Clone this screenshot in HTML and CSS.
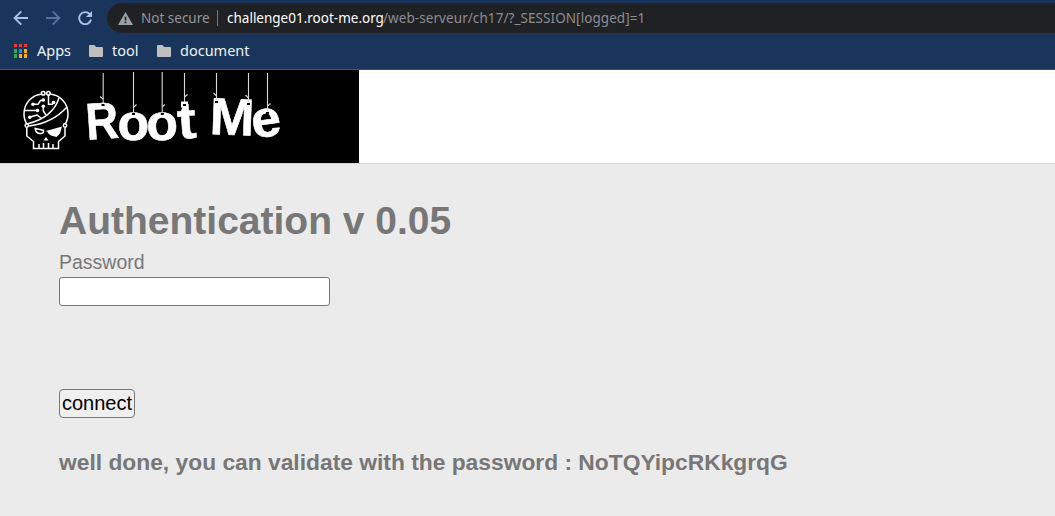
FILE: index.html
```
<!DOCTYPE html>
<html lang="en">
<head>
<meta charset="utf-8">
<title>Authentication v 0.05</title>
<link rel="stylesheet" href="styles.css">
</head>
<body>
<header class="browser">
  <div class="toolbar">
    <svg class="nav" width="107" height="36" viewBox="0 0 107 36" fill="none" stroke="#a9c3e8" stroke-width="1.9">
      <path d="M28 18H15.2M21.3 11.3L14.6 18L21.3 24.7"/>
      <path d="M46 18H58.8M52.7 11.3L59.4 18L52.7 24.7" stroke="#56729c"/>
      <path d="M89.7 14.2A6 6 0 1 0 91 19.5"/>
      <path d="M92 11V17H86Z" fill="#a9c3e8" stroke="none"/>
    </svg>
    <div class="address">
      <svg class="warn" width="15" height="13" viewBox="0 0 15 13"><path d="M7.5 0L15 13H0Z" fill="#9aa0a6"/><path d="M7.5 4.8V8.5M7.5 9.6V11.3" stroke="#202124" stroke-width="1.6"/></svg>
      <span class="insecure">Not secure</span>
      <span class="divider"></span>
      <span class="host">challenge01.root-me.org</span><span class="path">/web-serveur/ch17/?_SESSION[logged]=1</span>
    </div>
  </div>
  <nav class="bookmarks">
    <svg class="apps" width="13" height="14" viewBox="0 0 13 14">
      <path d="M0 0h3v3H0zM5 0h3v3H5zM10 0h3v3h-3z" fill="#f4372d"/>
      <path d="M0 5h3v4H0zM0 10h3v4H0z" fill="#34a853"/>
      <path d="M5 5h3v4H5z" fill="#268bf0"/>
      <path d="M10 5h3v4h-3zM5 10h3v4H5zM10 10h3v4h-3z" fill="#fbb00b"/>
    </svg>
    <span class="label label-apps">Apps</span>
    <svg class="folder" width="14" height="12" viewBox="0 0 14 12"><path d="M1 0h4.5L7 2h6q1 0 1 1v8q0 1-1 1H1q-1 0-1-1V1q0-1 1-1z" fill="#bfbfbf"/></svg>
    <span class="label label-tool">tool</span>
    <svg class="folder" width="14" height="12" viewBox="0 0 14 12"><path d="M1 0h4.5L7 2h6q1 0 1 1v8q0 1-1 1H1q-1 0-1-1V1q0-1 1-1z" fill="#bfbfbf"/></svg>
    <span class="label label-document">document</span>
  </nav>
</header>
<div class="banner">
  <svg class="logo" width="359" height="93" viewBox="0 70 359 93">
    <rect y="70" width="359" height="93" fill="#000"/>
    <g fill="none" stroke="#fff" stroke-width="1.5">
      <path d="M42 94C32 95 24 103 24 114Q24 120 27 124M50 94C60 95 68 103 68 114Q68 120 65 124"/>
      <circle cx="43.2" cy="93.3" r="1.8"/><circle cx="48.4" cy="93.3" r="1.8"/>
      <circle cx="26.8" cy="125.5" r="1.7"/><circle cx="65" cy="125.5" r="1.7"/>
      <path d="M26.8 127.5V136L33.5 141.5V148.5H58.5V141.5L65 136V127.5"/>
      <path d="M39 148V144M43.5 148V143M48.5 148V143M53 148V144"/>
      <path d="M27 124C43 120 55 111 59 98M29 126C45 124 58 117 67 107"/>
      <path d="M33 104.3H38L40.5 100.5H43M25 110.5H37M43.3 107V111L46 115M30 117L37 115L41 118M48.5 95V104.3H53"/>
      <path d="M34.5 128.2L44 130.6M35 128.5Q36 134 41 133.5Q44 133 43.5 130"/>
    </g>
    <g fill="#fff">
      <circle cx="33" cy="104.3" r="1.8"/><circle cx="43.3" cy="100" r="1.8"/><circle cx="43.3" cy="106.2" r="1.8"/><circle cx="37.5" cy="110.5" r="1.8"/><circle cx="29.8" cy="117.2" r="1.8"/><circle cx="53.5" cy="102.5" r="1.8"/>
      <path d="M46 131L62 126.5L60 133.5L56.5 137L51 135.5Q48.5 134 47.5 132ZM46 137L48.5 140.5H43.5Z"/>
    </g>
    <g class="letters">
      <text transform="translate(87 140) rotate(-4) scale(.87 1)">R</text>
      <text transform="translate(117.5 140.3)">o</text>
      <text transform="translate(146.2 140.3)">o</text>
      <text transform="translate(178.5 139) rotate(-4) scale(1.08 1)">t</text>
      <text transform="translate(209.3 134) rotate(2) scale(1.03 1)">M</text>
      <text transform="translate(253.5 138.5) rotate(-8) scale(1.02 1)">e</text>
    </g>
    <g stroke="#d8d8d8" stroke-width="1.1" fill="none">
      <path d="M103.2 73V103M133.5 72V112M162.2 72V112M184.5 73V103M216.5 73V100M248.5 73V102M267.5 73V111"/>
      <path d="M103 99L100 96.5M134 107L136.5 104.5M162 107L165 104.5M184.5 97L187.5 94.5M216.5 96L213.5 93M248.5 98L245.5 95M267.5 106L270.5 103.5"/>
    </g>
    <path d="M181 101.5h7v6h-7z" fill="#fff"/>
    <path d="M101.5 104h3v2h-3zM132 113h3v2h-3zM160.8 113h3v2h-3zM183 104h3v2h-3zM215 101h3v2h-3zM247 103h3v2h-3zM266 112h3v2h-3z" fill="#000"/>
  </svg>
</div>
<main class="content">
  <h1 class="title">Authentication v 0.05</h1>
  <form class="form">
    <label class="caption" for="password">Password</label>
    <input class="field" id="password" type="password">
    <button class="connect" type="button">connect</button>
  </form>
  <h3 class="message">well done, you can validate with the password : NoTQYipcRKkgrqG</h3>
</main>
</body>
</html>
```
FILE: styles.css
```
* { box-sizing: border-box; }
body {
  margin: 0;
  height: 516px;
  overflow: hidden;
  background: #ebebeb;
  color: #777;
  font-family: "Liberation Sans", Arial, sans-serif;
}
.browser {
  height: 70px;
  background: #1a355b;
  border-bottom: 1px solid #3c5474;
  font-family: "Noto Sans", sans-serif;
}
.toolbar { display: flex; height: 36px; }
.nav { flex: none; }
.address {
  display: flex;
  align-items: center;
  flex: 1;
  height: 30px;
  margin-top: 3px;
  padding-left: 11px;
  border-radius: 15px 0 0 15px;
  background: #202124;
  color: #92969b;
  font-size: 13.5px;
  white-space: nowrap;
}
.insecure { width: 69px; margin-left: 8px; }
.divider { width: 1px; height: 16px; margin: 0 9px 0 7px; background: #74777b; }
.host { width: 156px; color: #fff; }
.path { color: #8b8e92; letter-spacing: 0.07px; }
.bookmarks {
  display: flex;
  align-items: center;
  height: 30px;
  padding-left: 14px;
  color: #f0f3f7;
  font-size: 14.5px;
}
.label { line-height: 20px; margin-top: -2px; white-space: nowrap; }
.label-apps { width: 35px; margin-right: 17px; margin-left: 10px; }
.label-tool { width: 28px; margin-right: 17px; margin-left: 9px; }
.label-document { margin-left: 9px; }
.banner { height: 94px; background: #fff; border-bottom: 1px solid #d5d5d5; }
.logo { display: block; }
.letters {
  fill: #fff;
  stroke: #fff;
  stroke-width: 0.6px;
  font: bold 52px "Liberation Sans", Arial, sans-serif;
}
.content { padding: 34px 59px 0; }
.title { margin: 0; font-size: 39px; line-height: 45px; }
.form { display: flex; flex-direction: column; align-items: flex-start; }
.caption { margin-top: 8px; font-size: 19.5px; line-height: 23px; }
.field {
  width: 271px;
  height: 29px;
  margin-top: 3px;
  border: 1px solid #767676;
  border-radius: 3px;
  background: #fff;
}
.connect {
  width: 76px;
  height: 29px;
  margin-top: 83px;
  padding: 0;
  border: 1px solid #767676;
  border-radius: 4px;
  background: #efefef;
  color: #000;
  font: 20px "Liberation Sans", Arial, sans-serif;
}
.message { margin: 31px 0 0; font-size: 22.8px; line-height: 27px; white-space: nowrap; }
```
